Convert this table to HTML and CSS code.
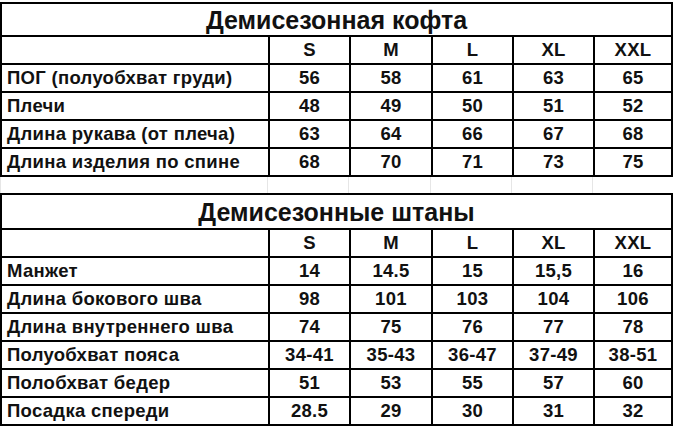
FILE: index.html
```html
<!DOCTYPE html>
<html lang="ru">
<head>
<meta charset="utf-8">
<title>Размеры</title>
<link rel="stylesheet" href="styles.css">
</head>
<body>
<div class="page">
  <div class="tbl tbl-top">
    <div class="title">Демисезонная кофта</div>
    <div class="lbl"></div><div class="val">S</div><div class="val">M</div><div class="val">L</div><div class="val">XL</div><div class="val">XXL</div>
    <div class="lbl">ПОГ (полуобхват груди)</div><div class="val">56</div><div class="val">58</div><div class="val">61</div><div class="val">63</div><div class="val">65</div>
    <div class="lbl">Плечи</div><div class="val">48</div><div class="val">49</div><div class="val">50</div><div class="val">51</div><div class="val">52</div>
    <div class="lbl">Длина рукава (от плеча)</div><div class="val">63</div><div class="val">64</div><div class="val">66</div><div class="val">67</div><div class="val">68</div>
    <div class="lbl">Длина изделия по спине</div><div class="val">68</div><div class="val">70</div><div class="val">71</div><div class="val">73</div><div class="val">75</div>
  </div>
  <div class="spacer">
    <div></div><div></div><div></div><div></div><div></div><div></div>
  </div>
  <div class="tbl tbl-bottom">
    <div class="title">Демисезонные штаны</div>
    <div class="lbl"></div><div class="val">S</div><div class="val">M</div><div class="val">L</div><div class="val">XL</div><div class="val">XXL</div>
    <div class="lbl">Манжет</div><div class="val">14</div><div class="val">14.5</div><div class="val">15</div><div class="val">15,5</div><div class="val">16</div>
    <div class="lbl">Длина бокового шва</div><div class="val">98</div><div class="val">101</div><div class="val">103</div><div class="val">104</div><div class="val">106</div>
    <div class="lbl">Длина внутреннего шва</div><div class="val">74</div><div class="val">75</div><div class="val">76</div><div class="val">77</div><div class="val">78</div>
    <div class="lbl">Полуобхват пояса</div><div class="val">34-41</div><div class="val">35-43</div><div class="val">36-47</div><div class="val">37-49</div><div class="val">38-51</div>
    <div class="lbl">Полобхват бедер</div><div class="val">51</div><div class="val">53</div><div class="val">55</div><div class="val">57</div><div class="val">60</div>
    <div class="lbl">Посадка спереди</div><div class="val">28.5</div><div class="val">29</div><div class="val">30</div><div class="val">31</div><div class="val">32</div>
  </div>
</div>
</body>
</html>
```
FILE: styles.css
```css
html, body {
  margin: 0;
  padding: 0;
  background: #ffffff;
}
.page {
  padding-top: 2px;
  width: 673px;
  font-family: "Liberation Sans", Arial, sans-serif;
  font-weight: bold;
  color: #111111;
}
.tbl {
  display: grid;
  grid-template-columns: 266px 79px 80px 79px 79px 76px;
  gap: 2px;
  padding: 2px;
  background: #000;
  width: max-content;
}
.tbl-top {
  grid-template-rows: 31px 26px repeat(4, 26px);
}
.tbl-bottom {
  grid-template-rows: 33px 26px repeat(6, 26px);
}
.tbl > div {
  background: #fff;
  display: flex;
  align-items: center;
  font-size: 18.5px;
  letter-spacing: 0.3px;
  line-height: 1;
}
.tbl > .title {
  grid-column: 1 / -1;
  justify-content: center;
  font-size: 25px;
  letter-spacing: 0;
  padding-top: 2px;
}
.tbl > .lbl {
  padding-left: 5px;
}
.tbl > .val {
  justify-content: center;
}
.spacer {
  display: grid;
  grid-template-columns: 268px 81px 82px 81px 81px 80px;
  height: 16px;
}
.spacer > div {
  border-right: 1px solid #e6e6e6;
}
.spacer > div:first-child {
  border-left: 1px solid #e6e6e6;
}
.spacer > div:last-child {
  border-right: none;
}
```
